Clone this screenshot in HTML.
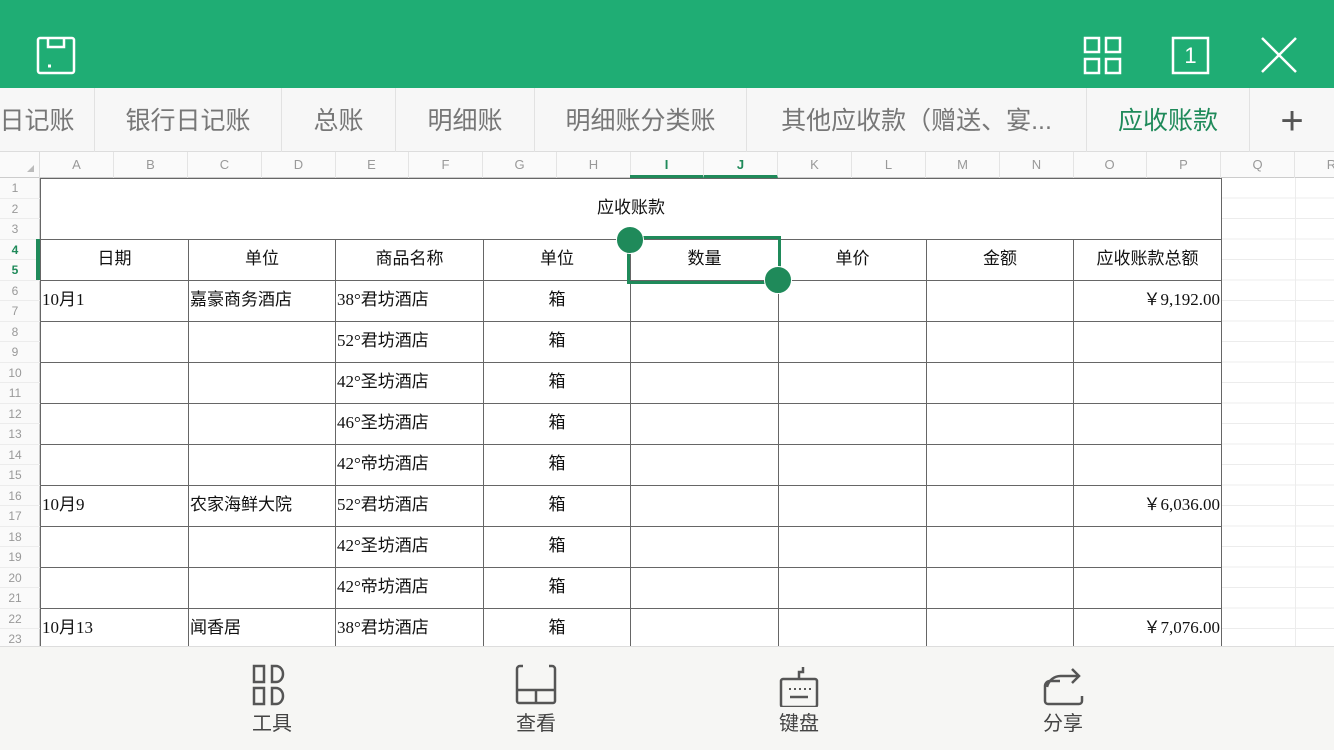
<!DOCTYPE html>
<html><head><meta charset="utf-8"><style>
*{margin:0;padding:0;box-sizing:border-box}
body{width:1334px;height:750px;overflow:hidden;background:#fff;position:relative;font-family:"Liberation Sans","Noto Sans CJK SC",sans-serif}
.top{position:absolute;left:0;top:0;width:1334px;height:88px;background:#1fad74}
.tabs{position:absolute;left:0;top:88px;width:1334px;height:64px;background:#f7f7f7;border-bottom:1px solid #ddd}
.tab{position:absolute;top:0;height:64px;line-height:66px;font-size:25px;color:#777;border-right:1px solid #e2e2e2;text-align:center;white-space:nowrap}
.colh{position:absolute;left:0;top:152px;width:1334px;height:26px;background:#fafafa;border-bottom:1px solid #ccc}
.cl{position:absolute;top:0;height:26px;line-height:26px;font-size:13px;color:#999;text-align:center;width:74px;border-right:1px solid #e4e4e4}
.rowh{position:absolute;left:0;top:178px;width:40px;height:470px;background:#fafafa;border-right:1px solid #ccc}
.rn{position:absolute;left:0;width:40px;height:20.5px;line-height:20.5px;font-size:12px;color:#999;text-align:center;border-bottom:1px solid #ececec;padding-right:10px}
.grid{position:absolute;left:1222px;top:178px;width:112px;height:470px;background:
repeating-linear-gradient(to bottom,transparent 0 19.5px,#ececec 19.5px 20.5px),
linear-gradient(to right,transparent 0 73px,#ececec 73px 74px,transparent 74px)}
table{position:absolute;left:40px;top:178px;border-collapse:collapse;table-layout:fixed}
td{border:1px solid #666;font-size:17px;color:#111;height:41px;line-height:38px;vertical-align:top;padding:0 1px;white-space:nowrap;overflow:hidden;font-family:"Liberation Serif","Noto Sans CJK SC",serif}
td.c{text-align:center;font-family:"Liberation Sans","Noto Sans CJK SC",sans-serif}
td.r{text-align:right}
.bot{position:absolute;left:0;top:646px;width:1334px;height:104px;background:#f6f6f4;border-top:1px solid #ddd}
.bi{position:absolute;top:0;width:120px;text-align:center}
.bi span{position:absolute;top:60px;left:0;width:120px;font-size:20px;color:#444}
</style></head><body>
<div class="top">
<svg width="1334" height="88" style="position:absolute;left:0;top:0" fill="none" stroke="#fff" stroke-width="2.5">
<rect x="38" y="38" width="36" height="35" rx="2"/><path d="M48 38v9h16v-9"/><path d="M48 66h3" stroke-width="3"/>
<rect x="1085" y="38" width="14" height="14"/><rect x="1106" y="38" width="14" height="14"/><rect x="1085" y="59" width="14" height="14"/><rect x="1106" y="59" width="14" height="14"/>
<rect x="1173" y="38" width="35" height="35"/>
<path d="M1262 38l34 34M1296 38l-34 34"/>
</svg>
<div style="position:absolute;left:1173px;top:38px;width:35px;height:35px;line-height:35px;text-align:center;color:#fff;font-size:22px">1</div>
</div>
<div class="tabs">
<div class="tab" style="left:-20px;width:115px">日记账</div>
<div class="tab" style="left:95px;width:187px">银行日记账</div>
<div class="tab" style="left:282px;width:114px">总账</div>
<div class="tab" style="left:396px;width:139px">明细账</div>
<div class="tab" style="left:535px;width:212px">明细账分类账</div>
<div class="tab" style="left:747px;width:340px">其他应收款（赠送、宴...</div>
<div class="tab" style="left:1087px;width:163px;color:#1f8a5a">应收账款</div>
<div class="tab" style="left:1250px;width:84px;border:none;font-size:40px;color:#555">+</div>
</div>
<div class="colh">
<div style="position:absolute;left:0;top:0;width:40px;height:26px;border-right:1px solid #ddd"></div>
<svg width="10" height="10" style="position:absolute;left:26px;top:12px"><path d="M8 1V8H1Z" fill="#bbb"/></svg>
<div class="cl" style="left:40px">A</div><div class="cl" style="left:114px">B</div><div class="cl" style="left:188px">C</div><div class="cl" style="left:262px">D</div><div class="cl" style="left:335px">E</div><div class="cl" style="left:409px">F</div><div class="cl" style="left:483px">G</div><div class="cl" style="left:557px">H</div>
<div class="cl" style="left:630px;color:#1f8a5a;font-weight:bold;border-bottom:3px solid #1f8a5a">I</div><div class="cl" style="left:704px;color:#1f8a5a;font-weight:bold;border-bottom:3px solid #1f8a5a">J</div>
<div class="cl" style="left:778px">K</div><div class="cl" style="left:852px">L</div><div class="cl" style="left:926px">M</div><div class="cl" style="left:1000px">N</div><div class="cl" style="left:1073px">O</div><div class="cl" style="left:1147px">P</div><div class="cl" style="left:1221px">Q</div><div class="cl" style="left:1295px">R</div>
</div>
<div class="rowh">
<div class="rn" style="top:0">1</div><div class="rn" style="top:20.5px">2</div><div class="rn" style="top:41px">3</div>
<div class="rn" style="top:61.5px;color:#1f8a5a;font-weight:bold">4</div><div class="rn" style="top:82px;color:#1f8a5a;font-weight:bold">5</div>
<div style="position:absolute;left:36px;top:61px;width:4px;height:41px;background:#1f8a5a"></div>
<div class="rn" style="top:102.5px">6</div><div class="rn" style="top:123px">7</div><div class="rn" style="top:143.5px">8</div><div class="rn" style="top:164px">9</div><div class="rn" style="top:184.5px">10</div><div class="rn" style="top:205px">11</div><div class="rn" style="top:225.5px">12</div><div class="rn" style="top:246px">13</div><div class="rn" style="top:266.5px">14</div><div class="rn" style="top:287px">15</div><div class="rn" style="top:307.5px">16</div><div class="rn" style="top:328px">17</div><div class="rn" style="top:348.5px">18</div><div class="rn" style="top:369px">19</div><div class="rn" style="top:389.5px">20</div><div class="rn" style="top:410px">21</div><div class="rn" style="top:430.5px">22</div><div class="rn" style="top:451px">23</div>
</div>
<div class="grid"></div>
<table>
<colgroup><col style="width:148px"><col style="width:147px"><col style="width:148px"><col style="width:147px"><col style="width:148px"><col style="width:148px"><col style="width:147px"><col style="width:148px"></colgroup>
<tr><td colspan="8" class="c" style="height:61px;line-height:58px">应收账款</td></tr>
<tr><td class="c">日期</td><td class="c">单位</td><td class="c">商品名称</td><td class="c">单位</td><td class="c">数量</td><td class="c">单价</td><td class="c">金额</td><td class="c">应收账款总额</td></tr>
<tr><td>10月1</td><td class="c" style="text-align:left">嘉豪商务酒店</td><td>38°君坊酒店</td><td class="c">箱</td><td></td><td></td><td></td><td class="r">￥9,192.00</td></tr>
<tr><td></td><td></td><td>52°君坊酒店</td><td class="c">箱</td><td></td><td></td><td></td><td></td></tr>
<tr><td></td><td></td><td>42°圣坊酒店</td><td class="c">箱</td><td></td><td></td><td></td><td></td></tr>
<tr><td></td><td></td><td>46°圣坊酒店</td><td class="c">箱</td><td></td><td></td><td></td><td></td></tr>
<tr><td></td><td></td><td>42°帝坊酒店</td><td class="c">箱</td><td></td><td></td><td></td><td></td></tr>
<tr><td>10月9</td><td class="c" style="text-align:left">农家海鲜大院</td><td>52°君坊酒店</td><td class="c">箱</td><td></td><td></td><td></td><td class="r">￥6,036.00</td></tr>
<tr><td></td><td></td><td>42°圣坊酒店</td><td class="c">箱</td><td></td><td></td><td></td><td></td></tr>
<tr><td></td><td></td><td>42°帝坊酒店</td><td class="c">箱</td><td></td><td></td><td></td><td></td></tr>
<tr><td>10月13</td><td class="c" style="text-align:left">闻香居</td><td>38°君坊酒店</td><td class="c">箱</td><td></td><td></td><td></td><td class="r">￥7,076.00</td></tr>
</table>
<div style="position:absolute;left:627px;top:236px;width:154px;height:48px;border:3px solid #1f8a5a"></div>
<div style="position:absolute;left:616px;top:226px;width:28px;height:28px;border-radius:50%;background:#1f8a5a;border:1px solid #fff"></div>
<div style="position:absolute;left:764px;top:266px;width:28px;height:28px;border-radius:50%;background:#1f8a5a;border:1px solid #fff"></div>
<div class="bot">
<svg width="1334" height="60" style="position:absolute;left:0;top:0" fill="none" stroke="#555" stroke-width="2.5">
<path d="M254 19h10v16h-10zM254 41h10v16h-10z"/><path d="M272 19h4a7 8 0 0 1 0 16h-4zM272 41h4a7 8 0 0 1 0 16h-4z"/>
<path d="M523 19h-3a3 3 0 0 0-3 3v32a2 2 0 0 0 2 2h34a2 2 0 0 0 2-2v-32a3 3 0 0 0-3-3h-3"/><path d="M517 43h38M536 43v13"/>
<rect x="781" y="32" width="36" height="28" rx="2"/><path d="M799 32v-7h4v-5"/><path d="M790 50h18"/><path d="M789 42h2M794 42h2M799 42h2M804 42h2M809 42h2" stroke-width="2"/>
<path d="M1060 34h-10a5 5 0 0 0-5 5v15a3 3 0 0 0 3 3h31a3 3 0 0 0 3-3v-5"/><path d="M1047 40a14 14 0 0 1 14-11h17"/><path d="M1072 22l7 7-7 7"/>
</svg>
<div class="bi" style="left:212px"><span>工具</span></div>
<div class="bi" style="left:476px"><span>查看</span></div>
<div class="bi" style="left:739px"><span>键盘</span></div>
<div class="bi" style="left:1003px"><span>分享</span></div>
</div>
</body></html>
